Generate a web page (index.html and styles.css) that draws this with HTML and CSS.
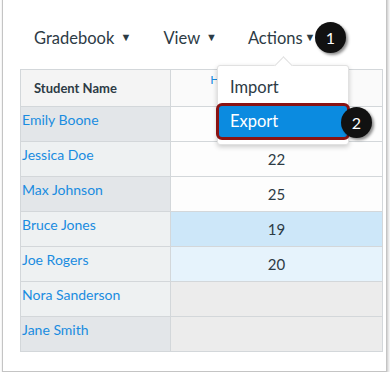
FILE: index.html
```html
<!DOCTYPE html>
<html lang="en">
<head>
  <meta charset="UTF-8" />
  <meta name="viewport" content="width=device-width, initial-scale=1.0" />
  <title>Gradebook Export</title>
  <link rel="stylesheet" href="styles.css">
</head>
<body>
  <div class="frame">
    <div class="toolbar">
      <span class="menu-btn">Gradebook <span class="caret">&#9660;</span></span>
      <span class="menu-btn">View <span class="caret">&#9660;</span></span>
      <span class="menu-btn actions">Actions<span class="caret">&#9660;</span>
        <span class="badge badge-one">1</span>
      </span>
    </div>

    <div class="grid-wrap">
      <table class="grid">
        <colgroup><col class="c-name"><col></colgroup>
        <tr class="head">
          <th class="name-col">Student Name</th>
          <th class="score-col"><a href="#">Homework Assignment 1</a></th>
        </tr>
        <tr class="dark"><td class="name-col"><a href="#">Emily Boone</a></td><td class="score"></td></tr>
        <tr><td class="name-col"><a href="#">Jessica Doe</a></td><td class="score">22</td></tr>
        <tr class="dark"><td class="name-col"><a href="#">Max Johnson</a></td><td class="score">25</td></tr>
        <tr><td class="name-col"><a href="#">Bruce Jones</a></td><td class="score selected">19</td></tr>
        <tr><td class="name-col"><a href="#">Joe Rogers</a></td><td class="score active-row">20</td></tr>
        <tr><td class="name-col"><a href="#">Nora Sanderson</a></td><td class="score empty"></td></tr>
        <tr class="dark"><td class="name-col"><a href="#">Jane Smith</a></td><td class="score empty"></td></tr>
      </table>

      <div class="dropdown">
        <div class="dd-item">Import</div>
        <div class="dd-item highlight">Export</div>
        <span class="badge badge-two">2</span>
      </div>
    </div>
  </div>
</body>
</html>
```

FILE: styles.css
```css
body { margin: 0; background: #fff; font-family: Lato, "Open Sans", sans-serif; color: #2d3b45; }
.frame { margin: -6px 3px 0 2px; height: 378px; border: 1px solid #c4c4c4; box-sizing: border-box; box-shadow: 1px 2px 3px rgba(0,0,0,0.25); background: #fff; }

.toolbar { display: flex; align-items: center; height: 74px; padding: 12px 0 0 31px; box-sizing: border-box; font-size: 16.5px; }
.menu-btn { margin-right: 32px; position: relative; white-space: nowrap; }
.caret { font-size: 11px; margin-left: 2px; vertical-align: 3px; }
.actions { margin-left: -1px; }
.actions .caret { margin-left: 2px; }

.badge { position: absolute; width: 31px; height: 31px; border-radius: 50%; background: #111; color: #fff; font-size: 16px; line-height: 31px; text-align: center; box-shadow: 2px 2px 3px rgba(0,0,0,0.45); }
.badge-one { left: 67px; top: -6px; }

.grid-wrap { position: relative; margin-left: 17px; width: 363px; }
.grid { border-collapse: collapse; width: 100%; table-layout: fixed; }
.c-name { width: 150px; }
.grid th, .grid td { border: 1px solid #d3d7da; padding: 0; box-sizing: border-box; }
.grid tr { height: 35px; }
.grid tr.head { height: 37px; }
.grid a { color: #1a8ce0; text-decoration: none; }
.head th { background: #fafafa; }
.head .name-col { background: #f4f4f4; font-size: 13px; font-weight: bold; text-align: left; padding-left: 13px; }
.head .score-col { vertical-align: top; font-size: 12px; font-weight: normal; padding-top: 2px; }

td.name-col { background: #eef1f2; vertical-align: top; padding: 4px 0 0 1px; font-size: 14px; }
.dark td.name-col { background: #e3e6e9; }
.score { background: #fdfdfd; text-align: center; font-size: 15px; padding-top: 4px; }
.score.selected { background: #cde7f9; }
.score.active-row { background: #e6f3fc; }
.score.empty { background: #ececec; }

.dropdown { position: absolute; left: 197px; top: -4px; width: 130px; padding: 6px 0 4px; background: #fff; border: 1px solid #e1e1e1; border-radius: 3px; box-shadow: 0 2px 5px rgba(0,0,0,0.2); font-size: 16.5px; }
.dropdown::before { content: ""; position: absolute; top: -7px; left: 59px; width: 12px; height: 12px; background: #fff; border-top: 1px solid #e1e1e1; border-left: 1px solid #e1e1e1; transform: rotate(45deg); }
.dd-item { position: relative; padding: 0 12px; height: 31px; line-height: 31px; }
.dd-item.highlight { margin: 0 -2px; padding: 0 11px; height: 31px; line-height: 31px; background: #0b8be0; color: #fff; border: 3px solid #8a1313; border-radius: 6px; }
.badge-two { right: -24px; top: 41px; }
```
